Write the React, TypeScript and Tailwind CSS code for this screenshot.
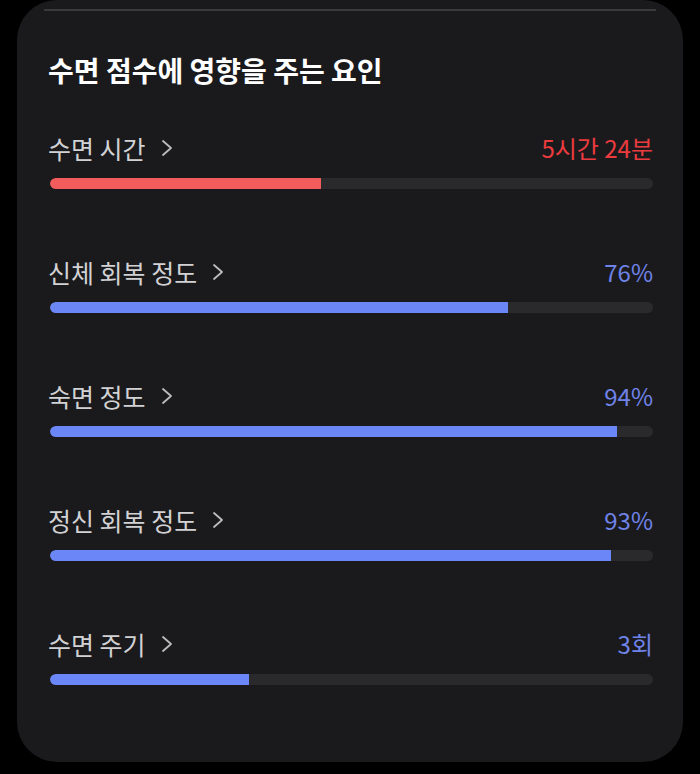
import React from 'react'

interface Factor {
	label: string
	value: string
	percent: number
	tone: 'red' | 'blue'
}

const factors: Factor[] = [
	{ label: '수면 시간', value: '5시간 24분', percent: 45, tone: 'red' },
	{ label: '신체 회복 정도', value: '76%', percent: 76, tone: 'blue' },
	{ label: '숙면 정도', value: '94%', percent: 94, tone: 'blue' },
	{ label: '정신 회복 정도', value: '93%', percent: 93, tone: 'blue' },
	{ label: '수면 주기', value: '3회', percent: 33, tone: 'blue' },
]

const Chevron = () => (
	<svg width="12" height="18" viewBox="0 0 12 18" fill="none" className="text-[#bdbdc0]">
		<path d="M2 2 L10 9 L2 16" stroke="currentColor" strokeWidth="1.8" strokeLinecap="round" strokeLinejoin="round" />
	</svg>
)

const FactorRow = ({ data }: { data: Factor }) => {
	const isRed = data.tone === 'red'
	return (
		<div className="flex flex-col">
			<div className="flex items-center justify-between h-[30px]">
				<div className="flex items-center gap-[15px]">
					<span className="text-[25px] leading-[30px] text-[#d2d2d4]">{data.label}</span>
					<Chevron />
				</div>
				<span
					className={
						isRed
							? 'text-[24px] leading-[30px] text-[#ec3b3e]'
							: 'text-[24px] leading-[30px] text-[#6f83e8]'
					}
				>
					{data.value}
				</span>
			</div>
			<div className="mt-[15px] ml-[2px] h-[11px] rounded-full bg-[#2a2a2d] overflow-hidden">
				<div
					className={isRed ? 'h-full rounded-l-full bg-[#f25c5c]' : 'h-full rounded-l-full bg-[#6a86f7]'}
					style={{ width: `${data.percent}%` }}
				/>
			</div>
		</div>
	)
}

export default function App() {
	return (
		<div
			className="w-[700px] h-[774px] bg-black overflow-hidden"
			style={{ fontFamily: '"Noto Sans CJK KR", "Noto Sans", sans-serif' }}
		>
			<div className="mx-[17px] h-[762px] rounded-[40px] bg-[#1a1a1d] flex flex-col">
				<div className="mt-[9px] mx-[27px] h-[2px] bg-[#3a3a3d]" />
				<div className="pl-[31px] pr-[30px] flex flex-col">
					<h1 className="mt-[42px] text-[28px] leading-[34px] font-bold text-white">
						수면 점수에 영향을 주는 요인
					</h1>
					<div className="mt-[46px] flex flex-col gap-[68px]">
						{factors.map((f) => (
							<FactorRow key={f.label} data={f} />
						))}
					</div>
				</div>
			</div>
		</div>
	)
}
